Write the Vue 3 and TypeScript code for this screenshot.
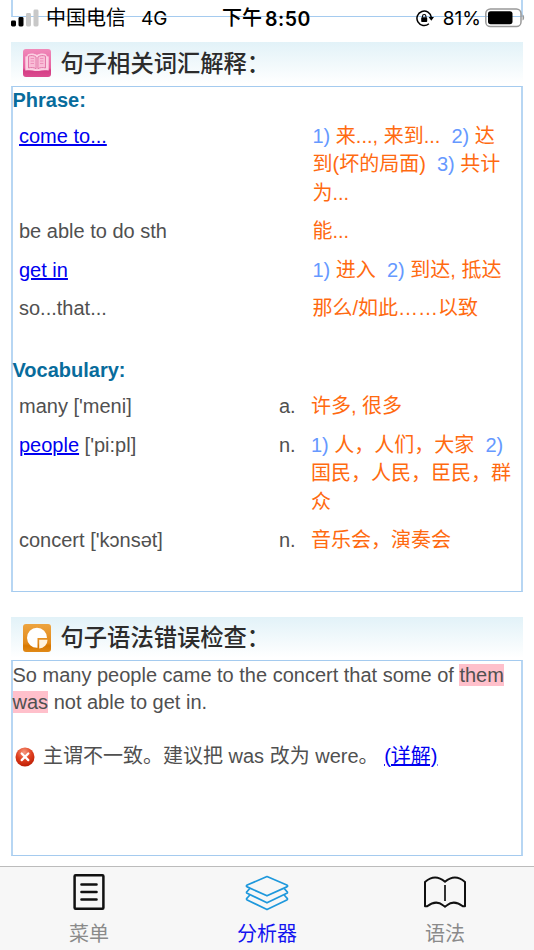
<script setup lang="ts">
interface Part {
  text: string
  num?: boolean
}
interface Entry {
  term: string
  link?: boolean
  phonetic?: string
  pos?: string
  lines: Part[][]
}

const n = (text: string): Part => ({ text, num: true })
const t = (text: string): Part => ({ text })

const phrases: Entry[] = [
  {
    term: 'come to...',
    link: true,
    lines: [
      [n('1)'), t(' 来..., 来到...  '), n('2)'), t(' 达')],
      [t('到(坏的局面)  '), n('3)'), t(' 共计')],
      [t('为...')],
    ],
  },
  { term: 'be able to do sth', lines: [[t('能...')]] },
  { term: 'get in', link: true, lines: [[n('1)'), t(' 进入  '), n('2)'), t(' 到达, 抵达')]] },
  { term: 'so...that...', lines: [[t('那么/如此……以致')]] },
]

const words: Entry[] = [
  { term: 'many', phonetic: " ['meni]", pos: 'a.', lines: [[t('许多, 很多')]] },
  {
    term: 'people',
    link: true,
    phonetic: " ['pi:pl]",
    pos: 'n.',
    lines: [
      [n('1)'), t(' 人，人们，大家  '), n('2)')],
      [t('国民，人民，臣民，群')],
      [t('众')],
    ],
  },
  { term: 'concert', phonetic: " ['kɔnsət]", pos: 'n.', lines: [[t('音乐会，演奏会')]] },
]

const groups = [
  { title: 'Phrase:', kind: 'phrase', entries: phrases },
  { title: 'Vocabulary:', kind: 'vocab', entries: words },
]
</script>

<template>
  <div class="screen">
    <header class="status">
      <div class="carrier">
        <svg class="signal" width="28" height="18" viewBox="0 0 28 18">
          <rect x="0" y="11.5" width="5" height="6" rx="1.4" fill="#000" />
          <rect x="7.5" y="8" width="5" height="9.5" rx="1.4" fill="#000" />
          <rect x="15" y="4" width="5" height="13.5" rx="1.4" fill="#c8c8c8" />
          <rect x="22.5" y="0.5" width="5" height="17" rx="1.4" fill="#c8c8c8" />
        </svg>
        <span class="name">中国电信</span>
        <span class="net">4G</span>
      </div>
      <div class="time"><span class="noon">下午</span><span class="clock">8:50</span></div>
      <div class="power">
        <svg width="19" height="18" viewBox="0 0 19 18">
          <path d="M12.900 14.700A7.200 7.200 0 1 1 15.300 8.400" fill="none" stroke="#000" stroke-width="1.5" />
          <path d="M12.600 8h5.400l-2.700 3.700z" fill="#000" />
          <rect x="5.200" y="8.300" width="6" height="4.700" rx=".8" fill="#000" />
          <path d="M6.500 8.500V7.200a1.700 1.700 0 0 1 3.400 0v1.300" fill="none" stroke="#000" stroke-width="1.100" />
        </svg>
        <span class="percent">81%</span>
        <svg class="battery" width="40" height="20" viewBox="0 0 40 20">
          <rect x=".8" y=".9" width="35.2" height="17.6" rx="4.6" fill="none" stroke="#999" stroke-width="1.5" />
          <rect x="3" y="3.2" width="24.5" height="13" rx="2.6" fill="#000" />
          <path d="M37.5 6.5c1.400.6 1.600 1.800 1.600 3s-.2 2.400-1.600 3z" fill="#999" />
        </svg>
      </div>
    </header>

    <main class="content">
      <div class="box tail"></div>

      <h2 class="heading first">
        <svg width="28" height="28" viewBox="0 0 28 28">
          <defs>
            <linearGradient id="pink" x1="0" y1="0" x2="0" y2="1">
              <stop offset="0" stop-color="#f08aba" />
              <stop offset=".68" stop-color="#e760a0" />
              <stop offset=".76" stop-color="#d43d85" />
              <stop offset="1" stop-color="#db4c90" />
            </linearGradient>
          </defs>
          <rect width="28" height="28" rx="3" fill="url(#pink)" />
          <path d="M2.300 7.500l1.700-.3 1-2c3-1.200 6.500-.8 9 .8 2.500-1.600 6-2 9-.8l1 2 1.700.3v14c-3.800-.6-7-.4-9.700.6h-4c-2.700-1-5.900-1.200-9.700-.6z" fill="#fbd0e2" />
          <path d="M5.500 7.200c2.500-1.100 5.400-.9 7.600.9v11.600c-2.200-1.300-4.900-1.500-7.600-.7zM22.500 7.200c-2.500-1.100-5.400-.9-7.600.9v11.600c2.200-1.300 4.900-1.500 7.600-.7z" fill="#f9bdd7" stroke="#e06fa4" stroke-width=".9" />
          <path d="M7.600 9.500h3.400M7.600 12h3.400M7.600 14.500h3.400M17 9.500h3.400M17 12h3.400M17 14.500h3.400" stroke="#ee8fb9" stroke-width="1" />
        </svg>
        <span>句子相关词汇解释：</span>
      </h2>

      <section class="box glossary">
        <div v-for="g in groups" :key="g.kind" :class="['group', g.kind]">
          <h3>{{ g.title }}</h3>
          <div v-for="e in g.entries" :key="e.term" class="row">
            <div class="term">
              <a v-if="e.link">{{ e.term }}</a><template v-else>{{ e.term }}</template>{{ e.phonetic }}
            </div>
            <div v-if="e.pos" class="pos">{{ e.pos }}</div>
            <div class="meaning">
              <div v-for="(line, i) in e.lines" :key="i" class="line"><span v-for="(p, j) in line" :key="j" :class="{ num: p.num }">{{ p.text }}</span></div>
            </div>
          </div>
        </div>
      </section>

      <h2 class="heading second">
        <svg width="28" height="28" viewBox="0 0 28 28">
          <defs>
            <linearGradient id="amber" x1="0" y1="0" x2="0" y2="1">
              <stop offset="0" stop-color="#eda440" />
              <stop offset=".68" stop-color="#e28a1b" />
              <stop offset=".78" stop-color="#d87800" />
              <stop offset="1" stop-color="#e18a18" />
            </linearGradient>
          </defs>
          <rect width="28" height="28" rx="3" fill="url(#amber)" />
          <path d="M14.500 14h9.500A10 10 0 1 0 14.500 23.800z" fill="#fff" />
          <path d="M16.200 15.800h8.300a8.500 8.500 0 0 1-8.300 8.700z" fill="#fff3df" />
        </svg>
        <span>句子语法错误检查：</span>
      </h2>

      <section class="box check">
        <p class="sentence">So many people came to the concert that some of <mark>them</mark><br /><mark>was</mark> not able to get in.</p>
        <p class="issue">
          <svg width="20" height="20" viewBox="0 0 20 20">
            <defs>
              <radialGradient id="red" cx=".45" cy=".25" r=".8">
                <stop offset="0" stop-color="#f79a80" />
                <stop offset=".5" stop-color="#df4020" />
                <stop offset="1" stop-color="#b81800" />
              </radialGradient>
            </defs>
            <circle cx="10" cy="10" r="9.500" fill="url(#red)" />
            <path d="M6.700 6.500l6.600 6.600M13.300 6.500l-6.600 6.600" stroke="#fff" stroke-width="2.300" stroke-linecap="round" />
          </svg>
          <span>主谓不一致。建议把 was 改为 were。 <a>(详解)</a></span>
        </p>
      </section>
    </main>

    <nav class="tabs">
      <div class="tab">
        <svg width="44" height="38" viewBox="0 0 44 38" fill="none" stroke="#111" stroke-width="2.500">
          <rect x="7.600" y="2.300" width="28.800" height="33.400" rx="1" />
          <path d="M14.500 11.500h15M14.500 19h15M14.500 26.500h15" stroke-width="2.600" stroke-linecap="round" />
        </svg>
        <span>菜单</span>
      </div>
      <div class="tab active">
        <svg width="44" height="38" viewBox="0 0 44 38" fill="none" stroke="#1e98dc" stroke-width="1.700" stroke-linejoin="round">
          <path d="M22 3.500L41.800 12q1.600.9 0 1.900L22 22.800 2.200 13.900q-1.600-1 0-1.900z" />
          <path d="M4.800 15.500L2.200 18.300q-1.400 1.200 0 2L22 29.800l19.800-9.500q1.400-.8 0-2L39.200 15.500" />
          <path d="M4.800 22L2.200 25q-1.400 1.200 0 2L22 36.600 41.800 27q1.400-.8 0-2l-2.600-3" />
        </svg>
        <span>分析器</span>
      </div>
      <div class="tab">
        <svg width="44" height="38" viewBox="0 0 44 38" fill="none" stroke="#111" stroke-width="2">
          <path d="M22 8.800Q12 .2 2 9V33.200H4.200Q13 26.600 20 32.200L22 33.700l2-1.500Q31 26.600 39.800 33.200H42V9Q32 .2 22 8.800z" stroke-linejoin="round" />
          <path d="M22 12v16" stroke-width="1.700" />
        </svg>
        <span>语法</span>
      </div>
    </nav>
  </div>
</template>

<style>
body {
  margin: 0;
  background: #fff;
}
</style>

<style scoped>
.screen {
  position: relative;
  display: flex;
  flex-direction: column;
  width: 534px;
  height: 950px;
  overflow: hidden;
  background: #fff;
  color: #505050;
  font: 20px/27px "Liberation Sans", "Noto Sans CJK SC", sans-serif;
}
h2, h3, p {
  margin: 0;
}
a {
  color: #0000f0;
  text-decoration: underline;
  text-decoration-thickness: 1.5px;
}
.status {
  position: absolute;
  inset: 0 0 auto 0;
  height: 34px;
  display: grid;
  grid-template-columns: 222px 1fr auto;
  align-items: center;
  padding: 0 9px 0 11px;
  box-sizing: border-box;
  color: #000;
  font: 19px/34px Inter, "Noto Sans CJK SC", sans-serif;
  white-space: nowrap;
}
.status > div {
  display: flex;
  align-items: center;
}
.signal {
  margin-top: -1px;
}
.name {
  margin-left: 7px;
  font-size: 20px;
}
.net {
  margin-left: 15px;
  padding-top: 2px;
}
.time {
  margin-left: -11px;
  gap: 3px;
  font-weight: 600;
}
.noon {
  font-size: 20px;
  font-weight: 500;
}
.clock {
  padding-top: 2px;
  font-size: 19.500px;
  letter-spacing: 0.500px;
}
.percent {
  margin: 0 4px 0 8px;
  padding-top: 2px;
}
.content {
  flex: 1;
  padding: 0 11px;
}
.box {
  box-sizing: border-box;
  border: solid #b7d6f3;
  border-width: 1px 2px;
  border-top-color: #a5cbef;
  border-bottom-color: #a5cbef;
}
.tail {
  height: 17px;
  border-top: 0;
}
.heading {
  display: flex;
  align-items: center;
  gap: 10px;
  height: 43px;
  box-sizing: border-box;
  padding: 0 0 2px 12px;
  background: linear-gradient(#e2f2f8, #fff 95%);
  color: #2c2c2c;
  font: 500 23.300px/40px "Noto Sans CJK SC", sans-serif;
}
.heading span {
  margin: -3px 0 0 -0.500px;
}
.heading.first {
  margin-top: 25px;
  height: 44px;
}
.heading.second {
  margin-top: 25px;
}
.glossary {
  height: 506px;
}
h3 {
  height: 30px;
  margin-left: -0.500px;
  color: #086c9c;
  font-size: 20px;
  line-height: 27px;
}
.phrase h3 {
  height: 29.500px;
}
.vocab h3 {
  margin-top: 29.500px;
}
.row {
  display: flex;
  padding: 5px 0 5px 6px;
  line-height: 28.500px;
  white-space: pre;
}
.term {
  width: 293.500px;
  white-space: nowrap;
}
.vocab .term {
  width: 260px;
}
.pos {
  width: 32px;
}
.meaning {
  color: #ff6a10;
}
.line {
  height: 28.500px;
}
.num {
  color: #6699ff;
}
.check {
  height: 196px;
  padding-top: 1px;
}
mark {
  background: #ffc0cb;
  color: inherit;
}
.sentence {
  margin-left: -0.500px;
  white-space: nowrap;
}
.issue {
  display: flex;
  align-items: center;
  gap: 8px;
  margin-top: 27px;
  padding-left: 2px;
}
.tabs {
  display: grid;
  grid-template-columns: repeat(3, 1fr);
  height: 84px;
  box-sizing: border-box;
  border-top: 1px solid #bcbcbc;
  background: #f7f7f7;
}
.tab {
  display: flex;
  flex-direction: column;
  align-items: center;
  padding-top: 6px;
  color: #8a8a8a;
}
.tab span {
  margin-top: 9px;
  font-size: 20px;
  line-height: 28px;
}
.tab.active {
  color: #1414f0;
}
</style>
